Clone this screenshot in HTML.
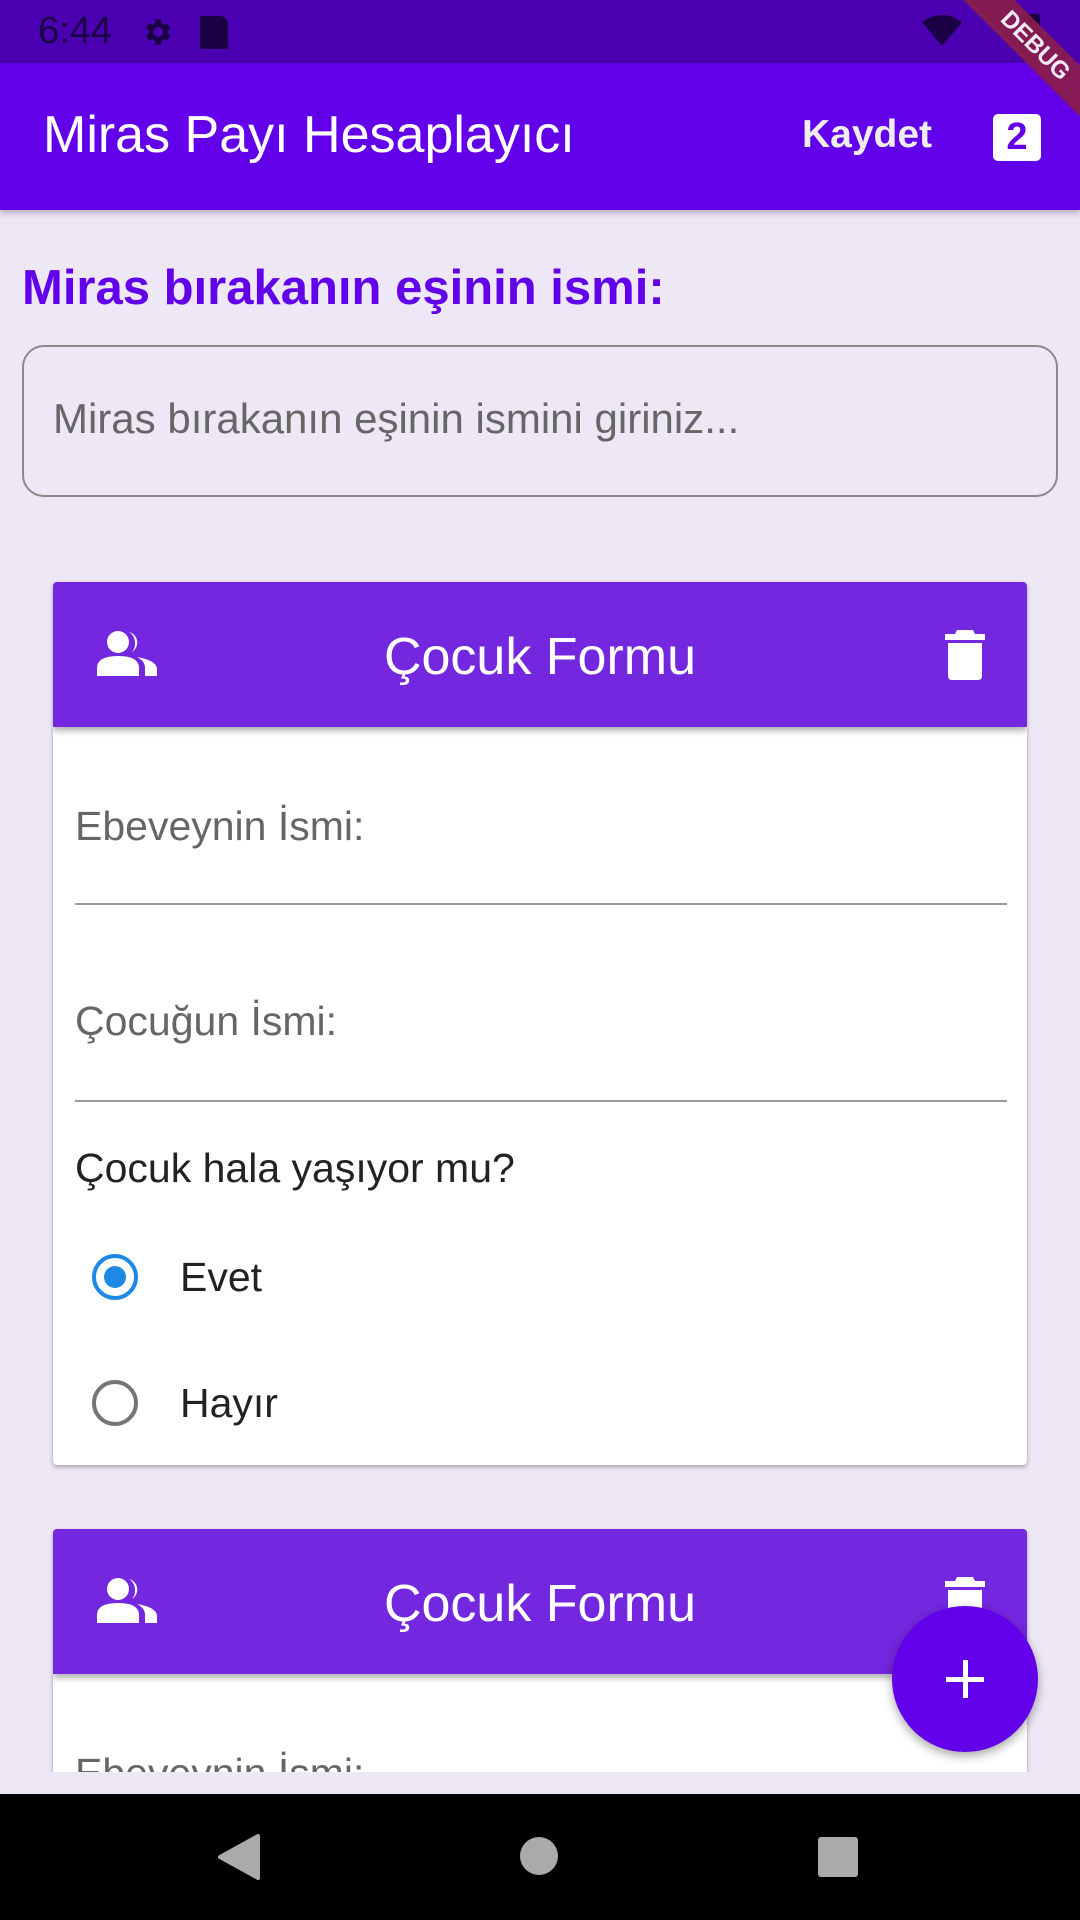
<!DOCTYPE html>
<html><head><meta charset="utf-8"><style>
*{margin:0;padding:0;box-sizing:border-box}
body{width:1080px;height:1920px;overflow:hidden;background:#ede7f6;font-family:"Liberation Sans",Roboto,sans-serif;position:relative}
.abs{position:absolute}
.status{left:0;top:0;width:1080px;height:63px;background:#4a00b0}
.appbar{left:0;top:63px;width:1080px;height:147px;background:#6200ea;box-shadow:0 3px 6px rgba(0,0,0,.25)}
.card{left:53px;width:974px;background:#fff;border-radius:4px;box-shadow:0 2px 4px rgba(0,0,0,.3);overflow:hidden}
.hdr{position:absolute;left:0;top:0;width:100%;height:145px;background:#7327df;box-shadow:0 4px 6px rgba(0,0,0,.3)}
.hdr .t{position:absolute;left:0;width:100%;top:3px;line-height:145px;text-align:center;color:#fff;font-size:52px;padding-left:0}
.lbl{position:absolute;left:22px;font-size:41px;color:#666}
.line{position:absolute;left:22px;width:932px;height:2px;background:#999}
</style></head><body>
<div class="abs status">
  <div class="abs" style="left:38px;top:10px;font-size:38px;color:#1a0045">6:44</div>
  <svg class="abs" style="left:140px;top:15px" width="34" height="34" viewBox="0 0 24 24"><path fill="#1a0045" d="M19.4 13a7.5 7.5 0 000-2l2.1-1.6-2-3.5-2.5 1a7 7 0 00-1.7-1L14.9 3h-4l-.4 2.9a7 7 0 00-1.7 1l-2.5-1-2 3.5L6.4 11a7.5 7.5 0 000 2l-2.1 1.6 2 3.5 2.5-1a7 7 0 001.7 1l.4 2.9h4l.4-2.9a7 7 0 001.7-1l2.5 1 2-3.5zM12.9 15.5a3.5 3.5 0 110-7 3.5 3.5 0 010 7z"/></svg>
  <div class="abs" style="left:200px;top:16px;width:28px;height:33px;background:#1a0045;border-radius:2px 8px 2px 2px"></div>
  <svg class="abs" style="left:922px;top:14px" width="40" height="32" viewBox="0 0 40 32"><path fill="#1a0045" d="M0 8Q20-6 40 8L20 32z"/></svg>
  <div class="abs" style="left:1024px;top:14px;width:16px;height:34px;background:#1a0045;border-radius:2px"></div>
</div>
<div class="abs appbar">
  <div class="abs" style="left:43px;top:42px;font-size:52px;color:#fff">Miras Payı Hesaplayıcı</div>
  <div class="abs" style="left:802px;top:50px;font-size:39px;font-weight:bold;color:#eee">Kaydet</div>
  <div class="abs" style="left:993px;top:51px;width:48px;height:47px;background:#fff;border-radius:5px;color:#6200ea;font-weight:bold;font-size:38px;text-align:center;line-height:47px">2</div>
</div>
<div class="abs" style="left:880px;top:0;width:200px;height:220px;overflow:hidden">
  <div class="abs" style="left:5px;top:28px;width:300px;height:36px;background:#8b1e4c;opacity:.92;transform:rotate(45deg);color:#fff;font-size:24px;font-weight:bold;text-align:center;line-height:36px">DEBUG</div>
</div>
<div class="abs" style="left:22px;top:260px;font-size:49px;font-weight:bold;color:#6200ea">Miras bırakanın eşinin ismi:</div>
<div class="abs" style="left:22px;top:345px;width:1036px;height:152px;border:2px solid #8a8a8a;border-radius:22px"></div>
<div class="abs" style="left:53px;top:395px;font-size:42px;color:#666">Miras bırakanın eşinin ismini giriniz...</div>

<div class="abs card" style="top:582px;height:883px">
  <div class="hdr">
    <svg class="abs" style="left:44px;top:48px" width="62" height="46" viewBox="0 0 62 46"><circle cx="21" cy="12" r="11" fill="#fff"/><path fill="#fff" d="M0 46V38Q0 26 21 26T42 38V46z"/><path fill="#fff" d="M32 2A11 11 0 0135 22 13 13 0 0038 12 13 13 0 0032 2zM40 27Q58 30 60 38V46H48V38Q48 31 40 27z"/></svg>
    <div class="t">Çocuk Formu</div>
    <svg class="abs" style="left:892px;top:48px" width="40" height="50" viewBox="0 0 40 50"><path fill="#fff" d="M12 0h16l2 4h10v6H0V4h10zM3 13h34v33q0 4-4 4H7q-4 0-4-4z"/></svg>
  </div>
  <div class="lbl" style="top:221px">Ebeveynin İsmi:</div>
  <div class="line" style="top:321px"></div>
  <div class="lbl" style="top:416px">Çocuğun İsmi:</div>
  <div class="line" style="top:518px"></div>
  <div class="lbl" style="top:563px;color:#222">Çocuk hala yaşıyor mu?</div>
  <div class="abs" style="left:39px;top:672px;width:46px;height:46px;border:4px solid #1e88e5;border-radius:50%"></div>
  <div class="abs" style="left:51px;top:684px;width:22px;height:22px;background:#1e88e5;border-radius:50%"></div>
  <div class="lbl" style="left:127px;top:672px;color:#222">Evet</div>
  <div class="abs" style="left:39px;top:798px;width:46px;height:46px;border:4px solid #757575;border-radius:50%"></div>
  <div class="lbl" style="left:127px;top:798px;color:#222">Hayır</div>
</div>

<div class="abs card" style="top:1529px;height:243px;border-radius:4px 4px 0 0">
  <div class="hdr">
    <svg class="abs" style="left:44px;top:48px" width="62" height="46" viewBox="0 0 62 46"><circle cx="21" cy="12" r="11" fill="#fff"/><path fill="#fff" d="M0 46V38Q0 26 21 26T42 38V46z"/><path fill="#fff" d="M32 2A11 11 0 0135 22 13 13 0 0038 12 13 13 0 0032 2zM40 27Q58 30 60 38V46H48V38Q48 31 40 27z"/></svg>
    <div class="t">Çocuk Formu</div>
    <svg class="abs" style="left:892px;top:48px" width="40" height="50" viewBox="0 0 40 50"><path fill="#fff" d="M12 0h16l2 4h10v6H0V4h10zM3 13h34v33q0 4-4 4H7q-4 0-4-4z"/></svg>
  </div>
  <div class="lbl" style="top:221px">Ebeveynin İsmi:</div>
</div>
<div class="abs" style="left:0;top:1772px;width:1080px;height:22px;background:#ede7f6"></div>

<div class="abs" style="left:892px;top:1606px;width:146px;height:146px;border-radius:50%;background:#6200ea;box-shadow:0 4px 10px rgba(0,0,0,.35)"></div>
<div class="abs" style="left:946px;top:1677px;width:38px;height:5px;background:#fff"></div>
<div class="abs" style="left:963px;top:1660px;width:5px;height:38px;background:#fff"></div>

<div class="abs" style="left:0;top:1794px;width:1080px;height:126px;background:#000"></div>
<svg class="abs" style="left:218px;top:1834px" width="42" height="46" viewBox="0 0 42 46"><path fill="#aaa" stroke="#aaa" stroke-width="4" stroke-linejoin="round" d="M40 2V44L2 23z"/></svg>
<div class="abs" style="left:520px;top:1837px;width:38px;height:38px;border-radius:50%;background:#aaa"></div>
<div class="abs" style="left:818px;top:1837px;width:40px;height:40px;border-radius:3px;background:#aaa"></div>
</body></html>
